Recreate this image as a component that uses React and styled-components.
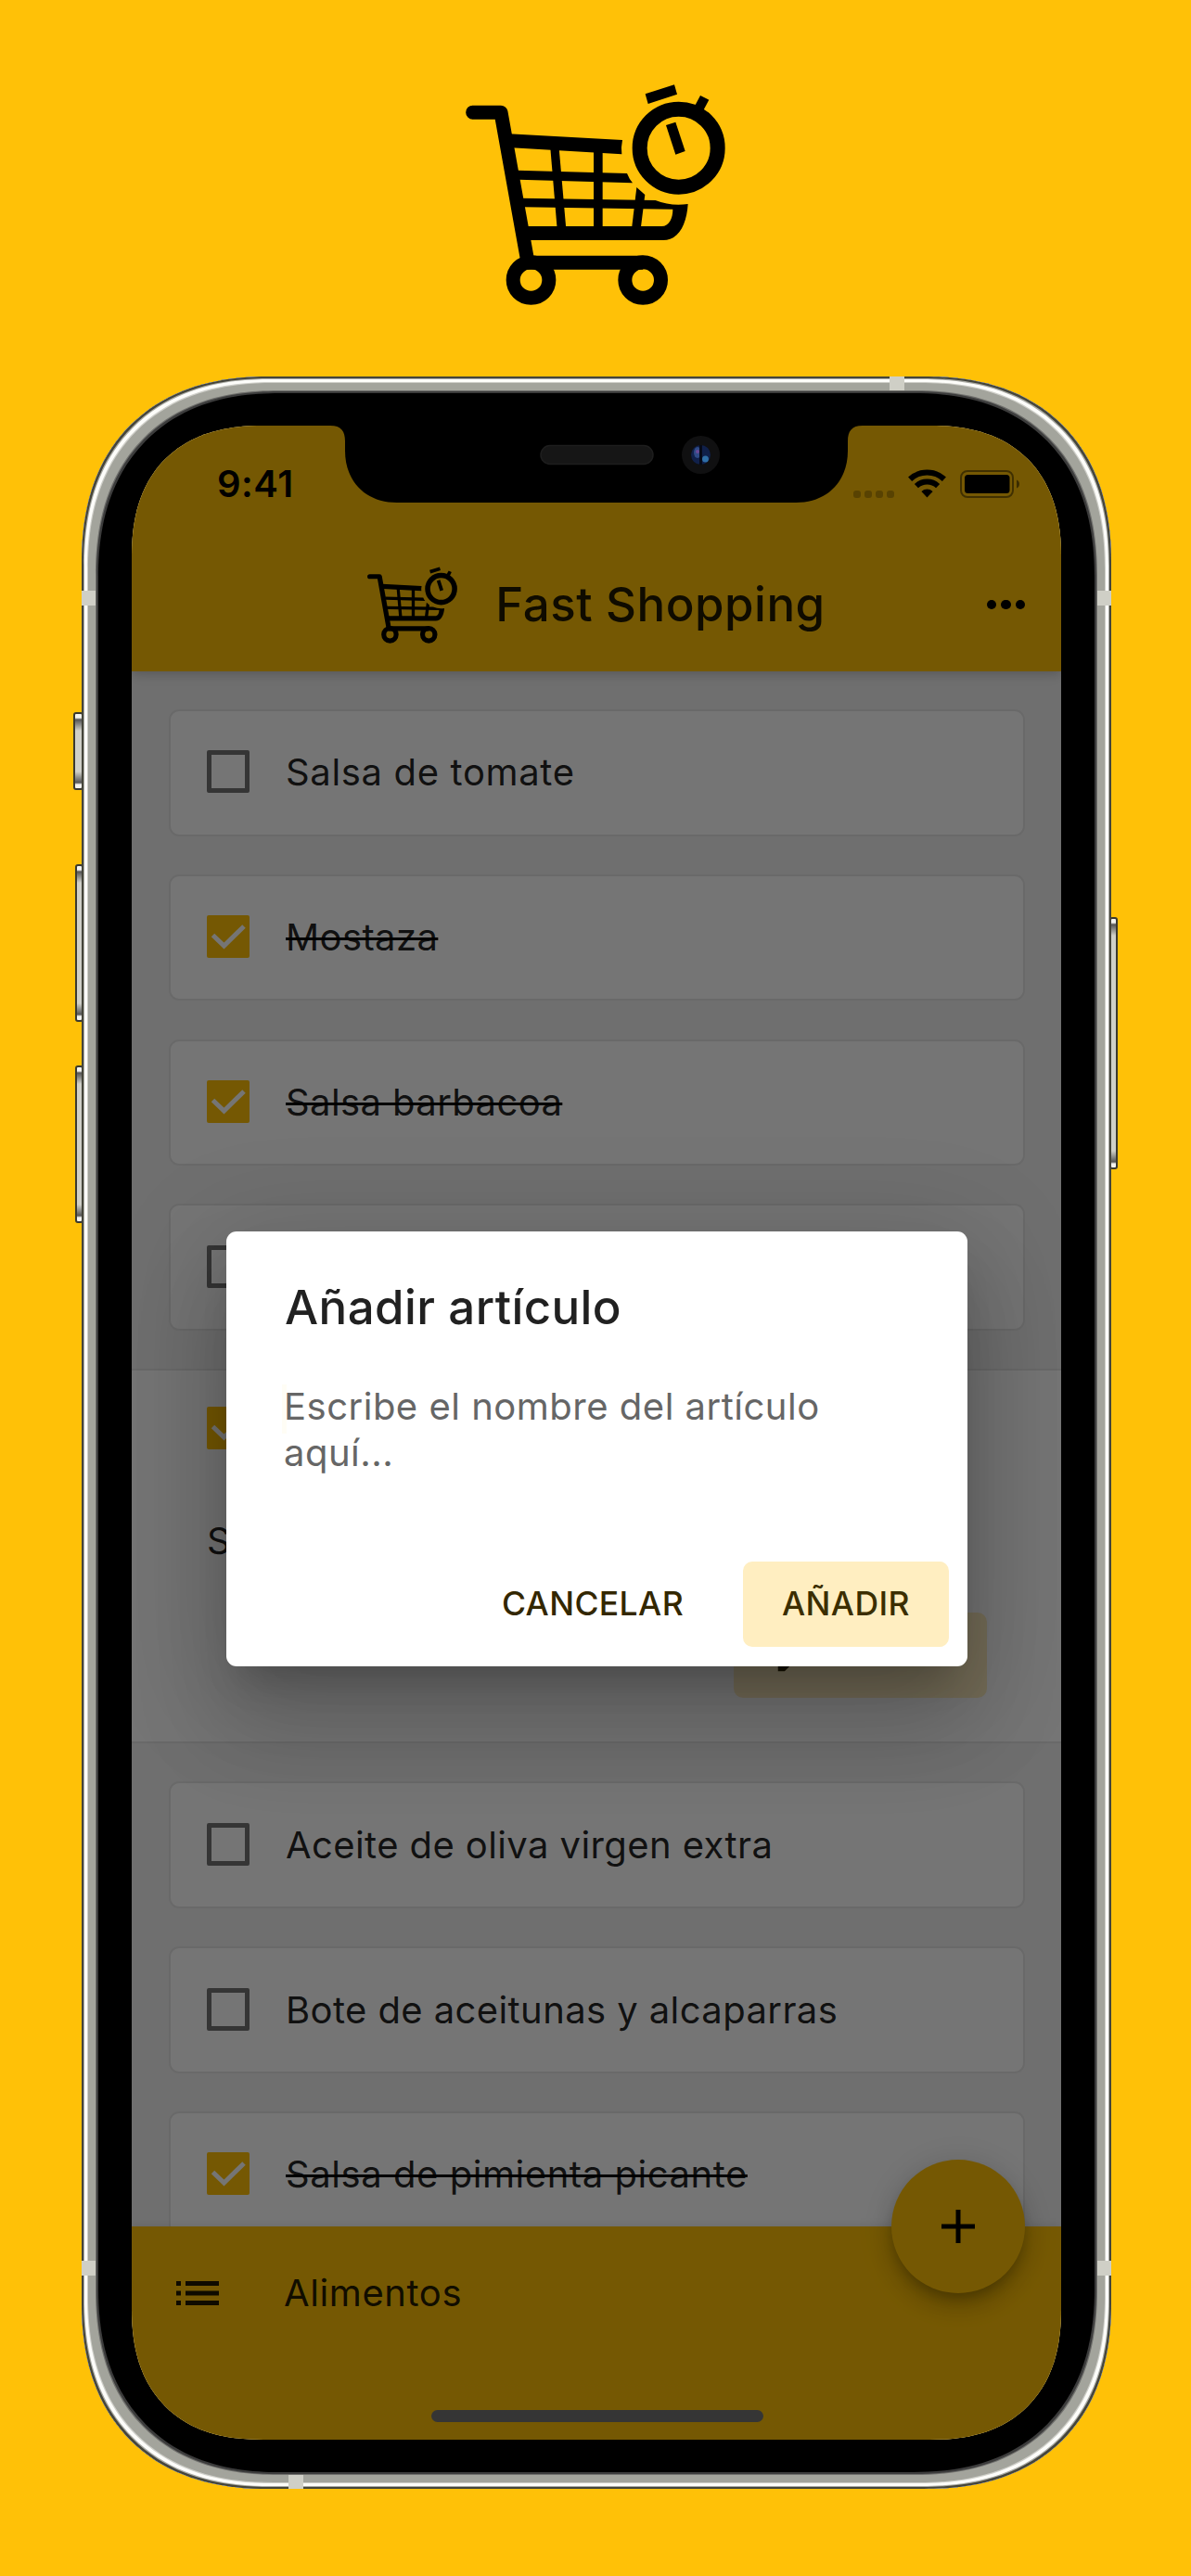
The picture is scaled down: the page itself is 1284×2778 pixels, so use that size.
import React from 'react';
import styled, { createGlobalStyle, css } from 'styled-components';

const AMBER = '#ffc107';

const GlobalStyle = createGlobalStyle`
  *, *::before, *::after { box-sizing: border-box; }
  body {
    margin: 0;
    background: ${AMBER};
    font-family: Inter, Roboto, 'Liberation Sans', sans-serif;
    -webkit-font-smoothing: antialiased;
  }
`;

const Page = styled.main`
  width: 1284px;
  height: 2778px;
  overflow: hidden;
  background: ${AMBER};
  display: flex;
  flex-direction: column;
  align-items: center;
  padding-top: 91px;
`;

const DeviceStage = styled.div`
  position: relative;
  z-index: 0;
`;

const Device = styled.div`
  position: relative;
  width: 1110px;
  height: 2278px;
  margin: 77px 0 0 2px;
  padding: 53px 54px 53px 54px;
  border-radius: 178px;
  background: #000;
  box-shadow:
    inset 0 0 0 2px #45453a,
    inset 0 0 0 3px #a9a9a3,
    inset 0 0 0 6px #fdfdfa,
    inset 0 0 0 7px #cfcfc9,
    inset 0 0 0 15px #a3a49c,
    inset 0 0 0 16px #6f6f6c,
    inset 0 0 0 18px #3c3c3c;

  @supports (corner-shape: superellipse(1.2)) {
    border-radius: 202px;
    corner-shape: superellipse(1.2);
  }
`;

const SideButton = styled.span`
  position: absolute;
  z-index: -1;
  top: ${(p) => p.$top}px;
  height: ${(p) => p.$height}px;
  width: ${(p) => p.$width || 9}px;
  ${(p) => (p.$right ? css`right: -7px;` : css`left: -${(p.$width || 9) - 2}px;`)}
  border: 2px solid #3a392f;
  border-radius: 3px;
  background: linear-gradient(
    #f4f4f0 0, #f4f4f0 4px, #555 6px, #d0d0c8 18px,
    #d0d0c8 calc(100% - 18px), #555 calc(100% - 6px), #f4f4f0 calc(100% - 4px)
  );
`;

const Band = styled.span`
  position: absolute;
  background: #cfcfc6;
  ${(p) => (p.$side === 'top' || p.$side === 'bottom'
    ? css`width: 16px; height: 15px; left: ${p.$at}px; ${p.$side}: 0;`
    : css`width: 15px; height: 16px; top: ${p.$at}px; ${p.$side}: 0;`)}
`;

const Screen = styled.div`
  position: relative;
  width: 1002px;
  height: 2172px;
  border-radius: 122px;
  overflow: hidden;
  display: flex;
  flex-direction: column;
  background: #f2f2f2;

  @supports (corner-shape: superellipse(1.24)) {
    border-radius: 142px;
    corner-shape: superellipse(1.24);
  }
`;

const Header = styled.header`
  position: relative;
  z-index: 1;
  height: 265px;
  background: ${AMBER};
  color: rgba(0, 0, 0, 0.87);
  box-shadow: 0 3px 9px rgba(0, 0, 0, 0.14), 0 3px 20px rgba(0, 0, 0, 0.08);
`;

const StatusBar = styled.div`
  height: 121px;
  display: flex;
  justify-content: space-between;
  align-items: flex-end;
  padding: 0 44px 43px 92px;
  color: #000;
`;

const Clock = styled.time`
  font-size: 40px;
  line-height: 40px;
  font-weight: 580;
  letter-spacing: 0.5px;
  margin-bottom: -5px;
`;

const StatusIcons = styled.div`
  display: flex;
  align-items: flex-end;
`;

const Dots = styled.div`
  display: flex;
  gap: 4px;
  margin-right: 15px;
`;

const SignalDot = styled.i`
  width: 8px;
  height: 8px;
  border-radius: 3px;
  background: rgba(0, 0, 0, 0.25);
`;

const Toolbar = styled.div`
  height: 144px;
  display: grid;
  grid-template-columns: 1fr auto 1fr;
  align-items: center;
`;

const Brand = styled.div`
  grid-column: 2;
  display: flex;
  align-items: center;
  gap: 41px;
`;

const BrandTitle = styled.h1`
  margin: 0;
  font-size: 51px;
  font-weight: 490;
  line-height: 60px;
  letter-spacing: 0.5px;
  white-space: nowrap;
`;

const MoreButton = styled.div`
  justify-self: end;
  display: flex;
  gap: 5px;
  margin-right: 39px;
`;

const MoreDot = styled.i`
  width: 10.5px;
  height: 10.5px;
  border-radius: 50%;
  background: #000;
`;

const List = styled.section`
  height: 1677px;
  overflow: hidden;
  display: flex;
  flex-direction: column;
  gap: 41.3px;
  padding-top: 41px;
`;

const Card = styled.article`
  flex: none;
  height: 136.5px;
  margin: 0 39px 0 40px;
  padding: 0 39px;
  display: flex;
  align-items: center;
  gap: 39px;
  background: #fff;
  border: 2px solid #e5e5e5;
  border-radius: 11px;
`;

const ItemName = styled.span`
  font-size: 40px;
  line-height: 50px;
  font-weight: 380;
  color: rgba(0, 0, 0, 0.87);
  white-space: nowrap;
  letter-spacing: ${(p) => p.$tracking ?? 0.4}px;
  ${(p) => p.$done && css`
    text-decoration: line-through;
    text-decoration-thickness: 2.6px;
    text-decoration-color: #000;
  `}
`;

const Box = styled.span`
  flex: none;
  width: 46px;
  height: 46px;
  margin-top: -2px;
  border-radius: 2px;
  display: block;
  ${(p) => (p.$checked ? css`background: ${AMBER};` : css`border: 5px solid #757575;`)}
`;

const Expanded = styled.article`
  flex: none;
  height: 404px;
  background: #fff;
  border-top: 2px solid #e5e5e5;
  border-bottom: 2px solid #e5e5e5;
  padding: 41px 80px 47px 81px;
  display: flex;
  flex-direction: column;
`;

const EditField = styled.div`
  margin-top: 74px;
  font-size: 40px;
  line-height: 50px;
  color: rgba(0, 0, 0, 0.87);
`;

const EditActions = styled.div`
  margin-top: auto;
  display: flex;
  justify-content: space-between;
`;

const TextButton = styled.button`
  border: 0;
  height: 92px;
  width: ${(p) => p.$width}px;
  padding: 0;
  display: flex;
  align-items: center;
  justify-content: center;
  gap: 16px;
  font-family: inherit;
  font-size: 35.5px;
  font-weight: 480;
  letter-spacing: 0.4px;
  border-radius: 10px;
  color: ${(p) => p.$color || '#332700'};
  background: ${(p) => (p.$filled ? '#ffeec1' : 'transparent')};
`;

const RaisedLabel = styled.span`
  margin-top: -3px;
`;

const Footer = styled.footer`
  position: relative;
  height: 230px;
  background: ${AMBER};
  color: rgba(0, 0, 0, 0.87);
  display: flex;
  flex-direction: column;
  justify-content: space-between;
  align-items: center;
  box-shadow: 0 -2px 8px rgba(0, 0, 0, 0.08);
`;

const FooterRow = styled.div`
  align-self: stretch;
  height: 144px;
  display: flex;
  align-items: center;
  gap: 70px;
  padding-left: 48px;
`;

const Fab = styled.div`
  position: absolute;
  right: 39px;
  top: -72.5px;
  width: 144px;
  height: 144px;
  border-radius: 50%;
  background: ${AMBER};
  display: flex;
  align-items: center;
  justify-content: center;
  box-shadow: 0 8px 13px -3px rgba(0, 0, 0, 0.2), 0 15px 26px rgba(0, 0, 0, 0.16),
    0 3px 40px rgba(0, 0, 0, 0.12);
`;

const HomeIndicator = styled.div`
  width: 358px;
  height: 13px;
  border-radius: 7px;
  margin: 0 0 19px 2px;
  background: #757575;
`;

const Scrim = styled.div`
  position: absolute;
  inset: 0;
  z-index: 2;
  background: rgba(0, 0, 0, 0.54);
`;

const Notch = styled.svg`
  position: absolute;
  z-index: 4;
  top: -1px;
  left: 214px;
  display: block;
`;

const Dialog = styled.div`
  position: absolute;
  z-index: 3;
  left: 102px;
  top: 868.5px;
  width: 799px;
  height: 469.2px;
  padding: 50.5px 20px 21px 63px;
  border-radius: 11px;
  background: #fff;
  display: flex;
  flex-direction: column;
  box-shadow: 0 28px 39px -18px rgba(0, 0, 0, 0.2), 0 62px 98px 8px rgba(0, 0, 0, 0.14),
    0 23px 118px 21px rgba(0, 0, 0, 0.12);
`;

const DialogTitle = styled.h2`
  margin: 0;
  font-size: 51px;
  font-weight: 490;
  line-height: 64px;
  letter-spacing: 0.4px;
  color: #212121;
`;

const Hint = styled.p`
  position: relative;
  margin: 50px 42px 0 -1px;
  font-size: 40px;
  font-weight: 380;
  line-height: 49.6px;
  letter-spacing: 0.5px;
  color: #666;
`;

const Caret = styled.i`
  position: absolute;
  z-index: -1;
  left: -2px;
  top: 1px;
  width: 5px;
  height: 53px;
  background: #fffdf5;
`;

const DialogActions = styled.div`
  margin-top: auto;
  display: flex;
  justify-content: flex-end;
  gap: 24px;
`;

const Drawing = styled.svg`
  display: block;
  flex: none;
`;

const StatusWifi = styled(Drawing)`
  margin-right: 15px;
`;

function CartLogo({ width, height }) {
  return (
    <Drawing width={width} height={height} viewBox="66 62 840 714" fill="#000">
      <g fill="none" stroke="#000" strokeWidth="45" strokeLinejoin="round">
        <path d="M89 152.500H180L266 632" strokeLinecap="round" />
        <path d="M265 638.500H640" />
        <circle cx="277.500" cy="695" r="58" />
        <circle cx="639.500" cy="695" r="58" />
        <circle cx="755" cy="268" r="126" strokeWidth="48" />
      </g>
      <path d="M205 222L573 242Q568 265 571 288L215 267Z" />
      <path d="M232 340L588 350Q595 368 606 381L238 370Z" />
      <path d="M245 430L680 437Q730 457 785 449C781 515 755 566 705 566H262V521H700C724 521 736 495 736 466L252 459Z" />
      <path d="M340 268H368L391 530H362Z" />
      <path d="M480 270H509V530H480Z" />
      <path d="M619 395L646 419L632 530H603Z" />
      <path d="M714 194L745 184L776 278L745 289Z" />
      <path d="M647 93L741 63L750 94L656 125Z" />
      <path d="M825 98L853 112L833 150L806 134Z" />
    </Drawing>
  );
}

function WifiIcon() {
  return (
    <StatusWifi width="41" height="31" viewBox="0 0 41 31">
      <g fill="none" stroke="#000" strokeWidth="6">
        <path d="M2.100 10.800A27 27 0 0 1 38.900 10.800" />
        <path d="M8.900 18.100A17 17 0 0 1 32.100 18.100" />
      </g>
      <path d="M20.500 30.500L14.400 24A9 9 0 0 1 26.600 24Z" />
    </StatusWifi>
  );
}

function BatteryIcon() {
  return (
    <Drawing width="65" height="30" viewBox="0 0 65 30">
      <rect x="1" y="1" width="56" height="28" rx="7" fill="none" stroke="#000" strokeOpacity=".45" strokeWidth="2" />
      <rect x="5" y="5" width="48.500" height="20" rx="3.500" />
      <path d="M61 10.500C65 12 65 18 61 19.500Z" fillOpacity=".5" />
    </Drawing>
  );
}

function Checkbox({ checked }) {
  return (
    <Box $checked={checked}>
      {checked && (
        <Drawing width="46" height="46" viewBox="0 0 46 46" fill="none" stroke="#fff" strokeWidth="5">
          <path d="M6.500 21.500L18.500 33L40 12" />
        </Drawing>
      )}
    </Box>
  );
}

function Item({ name, done, tracking }) {
  return (
    <Card>
      <Checkbox checked={done} />
      <ItemName $done={done} $tracking={tracking}>{name}</ItemName>
    </Card>
  );
}

export default function App() {
  return (
    <>
      <GlobalStyle />
      <Page>
        <CartLogo width={280} height={238} />
        <DeviceStage>
          <Device>
            <SideButton $top={362} $height={84} $width={11} />
            <SideButton $top={526} $height={170} />
            <SideButton $top={743} $height={170} />
            <SideButton $top={583} $height={272} $right />
            <Band $side="top" $at={871} />
            <Band $side="bottom" $at={223} />
            <Band $side="left" $at={231} />
            <Band $side="left" $at={2032} />
            <Band $side="right" $at={231} />
            <Band $side="right" $at={2032} />
            <Screen>
              <Header>
                <StatusBar>
                  <Clock>9:41</Clock>
                  <StatusIcons>
                    <Dots>
                      <SignalDot /><SignalDot /><SignalDot /><SignalDot />
                    </Dots>
                    <WifiIcon />
                    <BatteryIcon />
                  </StatusIcons>
                </StatusBar>
                <Toolbar>
                  <Brand>
                    <CartLogo width={97} height={83} />
                    <BrandTitle>Fast Shopping</BrandTitle>
                  </Brand>
                  <MoreButton>
                    <MoreDot /><MoreDot /><MoreDot />
                  </MoreButton>
                </Toolbar>
              </Header>
              <List>
                <Item name="Salsa de tomate" tracking={0.65} />
                <Item name="Mostaza" done />
                <Item name="Salsa barbacoa" done />
                <Item name="" />
                <Expanded>
                  <Checkbox checked />
                  <EditField>S</EditField>
                  <EditActions>
                    <TextButton $width={256} $color="#e53935">
                      <RaisedLabel>ELIMINAR</RaisedLabel>
                    </TextButton>
                    <TextButton $width={273} $filled>
                      <Drawing width="46" height="46" viewBox="0 0 24 24" fill="#332700">
                        <path d="M3 17.250V21h3.750L17.810 9.940l-3.750-3.750L3 17.250zM20.710 7.040a1 1 0 0 0 0-1.410l-2.340-2.340a1 1 0 0 0-1.410 0l-1.830 1.830 3.750 3.750 1.830-1.830z" />
                      </Drawing>
                      <RaisedLabel>EDITAR</RaisedLabel>
                    </TextButton>
                  </EditActions>
                </Expanded>
                <Item name="Aceite de oliva virgen extra" />
                <Item name="Bote de aceitunas y alcaparras" />
                <Item name="Salsa de pimienta picante" done tracking={0.55} />
              </List>
              <Footer>
                <FooterRow>
                  <Drawing width="46" height="26" viewBox="0 0 46 26" fill="rgba(0,0,0,.87)">
                    <path d="M0 0H5V5H0ZM10 0H46V5H10ZM0 10.500H5V15.500H0ZM10 10.500H46V15.500H10ZM0 21H5V26H0ZM10 21H46V26H10Z" />
                  </Drawing>
                  <ItemName $tracking={0.6}>Alimentos</ItemName>
                </FooterRow>
                <HomeIndicator />
                <Fab>
                  <Drawing width="36" height="36" viewBox="0 0 36 36">
                    <path d="M15.500 0H20.500V15.500H36V20.500H20.500V36H15.500V20.500H0V15.500H15.500Z" />
                  </Drawing>
                </Fab>
              </Footer>
              <Scrim />
              <Notch width="574" height="84" viewBox="0 0 574 84">
                <path d="M0 0H574V1C562 1 558 7 558 18V28C558 62 535 84 502 84H72C39 84 16 62 16 28V18C16 7 12 1 0 1Z" />
                <rect x="227" y="22.500" width="121" height="20" rx="10" fill="#161616" stroke="#1e1e1e" strokeWidth="1.500" />
                <circle cx="399.500" cy="32.500" r="20.500" fill="#101011" />
                <circle cx="399.500" cy="32.500" r="10.500" fill="#10204a" />
                <ellipse cx="396" cy="30" rx="4" ry="6" fill="#2f4a86" />
                <circle cx="396" cy="29" r="2" fill="#6a4a98" />
                <path d="M399.500 22V43" stroke="#060a18" strokeWidth="3" />
                <circle cx="404.500" cy="37" r="3.500" fill="#2f6fa8" />
              </Notch>
              <Dialog role="dialog">
                <DialogTitle>Añadir artículo</DialogTitle>
                <Hint>
                  <Caret />
                  Escribe el nombre del artículo aquí...
                </Hint>
                <DialogActions>
                  <TextButton $width={276}>CANCELAR</TextButton>
                  <TextButton $width={222} $filled $color="#3b2e00">AÑADIR</TextButton>
                </DialogActions>
              </Dialog>
            </Screen>
          </Device>
        </DeviceStage>
      </Page>
    </>
  );
}
